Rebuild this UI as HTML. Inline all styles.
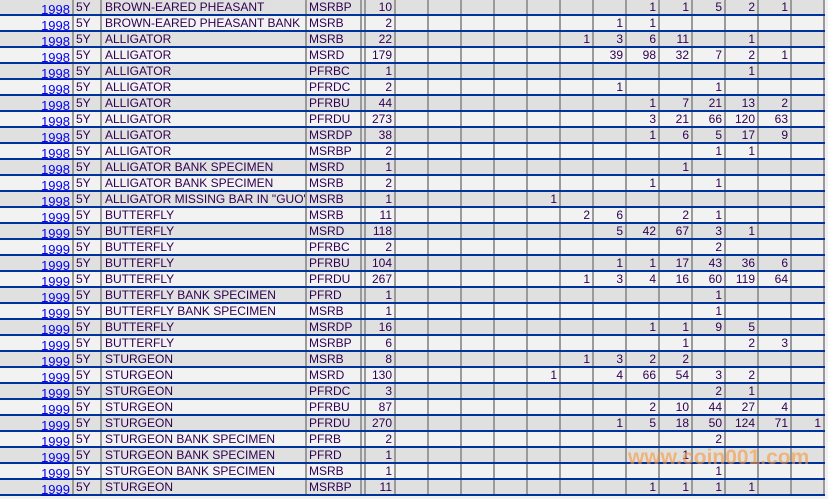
<!DOCTYPE html>
<html><head><meta charset="utf-8"><style>
*{margin:0;padding:0}
body{width:828px;height:485px;overflow:hidden;background:#f2f2f2;font-family:"Liberation Sans",sans-serif;font-size:12px;color:#2e0050;position:relative}
.r{display:flex;height:14px;border-bottom:2px solid #003399;width:825px}
.r:nth-child(odd){background:#e0e0e0}
.r:nth-child(even){background:#f2f2f2}
.r div{box-sizing:border-box;border-right:2px solid #9a9a9a;height:14px;line-height:15px;text-align:right;padding-right:2px;overflow:hidden;white-space:nowrap}
.r .y{width:74px;color:#0000ee;text-decoration:underline;font-size:13px;line-height:19px;overflow:visible;height:14px}
.r .f{width:28px;text-align:left;padding-left:2px}
.r .n{width:205px;text-align:left;padding-left:3px}
.r .t{width:55px;text-align:left;padding-left:2px}
.r .x{width:4px;padding:0}
.r .c{width:30px}
.r .d{width:33px}
#wm{position:absolute;left:628px;top:446px;font-size:21px;font-weight:bold;color:rgba(245,150,60,0.6);letter-spacing:0px}
#wrap{position:absolute;top:0;left:0}
</style></head><body><div id="wrap">
<div class="r"><div class="y">1998</div><div class="f">5Y</div><div class="n">BROWN-EARED PHEASANT</div><div class="t">MSRBP</div><div class="x"></div><div class="c">10</div><div class="d"></div><div class="d"></div><div class="d"></div><div class="d"></div><div class="d"></div><div class="d"></div><div class="d"></div><div class="d">1</div><div class="d">1</div><div class="d">5</div><div class="d">2</div><div class="d">1</div><div class="d"></div></div>
<div class="r"><div class="y">1998</div><div class="f">5Y</div><div class="n">BROWN-EARED PHEASANT BANK</div><div class="t">MSRB</div><div class="x"></div><div class="c">2</div><div class="d"></div><div class="d"></div><div class="d"></div><div class="d"></div><div class="d"></div><div class="d"></div><div class="d">1</div><div class="d">1</div><div class="d"></div><div class="d"></div><div class="d"></div><div class="d"></div><div class="d"></div></div>
<div class="r"><div class="y">1998</div><div class="f">5Y</div><div class="n">ALLIGATOR</div><div class="t">MSRB</div><div class="x"></div><div class="c">22</div><div class="d"></div><div class="d"></div><div class="d"></div><div class="d"></div><div class="d"></div><div class="d">1</div><div class="d">3</div><div class="d">6</div><div class="d">11</div><div class="d"></div><div class="d">1</div><div class="d"></div><div class="d"></div></div>
<div class="r"><div class="y">1998</div><div class="f">5Y</div><div class="n">ALLIGATOR</div><div class="t">MSRD</div><div class="x"></div><div class="c">179</div><div class="d"></div><div class="d"></div><div class="d"></div><div class="d"></div><div class="d"></div><div class="d"></div><div class="d">39</div><div class="d">98</div><div class="d">32</div><div class="d">7</div><div class="d">2</div><div class="d">1</div><div class="d"></div></div>
<div class="r"><div class="y">1998</div><div class="f">5Y</div><div class="n">ALLIGATOR</div><div class="t">PFRBC</div><div class="x"></div><div class="c">1</div><div class="d"></div><div class="d"></div><div class="d"></div><div class="d"></div><div class="d"></div><div class="d"></div><div class="d"></div><div class="d"></div><div class="d"></div><div class="d"></div><div class="d">1</div><div class="d"></div><div class="d"></div></div>
<div class="r"><div class="y">1998</div><div class="f">5Y</div><div class="n">ALLIGATOR</div><div class="t">PFRDC</div><div class="x"></div><div class="c">2</div><div class="d"></div><div class="d"></div><div class="d"></div><div class="d"></div><div class="d"></div><div class="d"></div><div class="d">1</div><div class="d"></div><div class="d"></div><div class="d">1</div><div class="d"></div><div class="d"></div><div class="d"></div></div>
<div class="r"><div class="y">1998</div><div class="f">5Y</div><div class="n">ALLIGATOR</div><div class="t">PFRBU</div><div class="x"></div><div class="c">44</div><div class="d"></div><div class="d"></div><div class="d"></div><div class="d"></div><div class="d"></div><div class="d"></div><div class="d"></div><div class="d">1</div><div class="d">7</div><div class="d">21</div><div class="d">13</div><div class="d">2</div><div class="d"></div></div>
<div class="r"><div class="y">1998</div><div class="f">5Y</div><div class="n">ALLIGATOR</div><div class="t">PFRDU</div><div class="x"></div><div class="c">273</div><div class="d"></div><div class="d"></div><div class="d"></div><div class="d"></div><div class="d"></div><div class="d"></div><div class="d"></div><div class="d">3</div><div class="d">21</div><div class="d">66</div><div class="d">120</div><div class="d">63</div><div class="d"></div></div>
<div class="r"><div class="y">1998</div><div class="f">5Y</div><div class="n">ALLIGATOR</div><div class="t">MSRDP</div><div class="x"></div><div class="c">38</div><div class="d"></div><div class="d"></div><div class="d"></div><div class="d"></div><div class="d"></div><div class="d"></div><div class="d"></div><div class="d">1</div><div class="d">6</div><div class="d">5</div><div class="d">17</div><div class="d">9</div><div class="d"></div></div>
<div class="r"><div class="y">1998</div><div class="f">5Y</div><div class="n">ALLIGATOR</div><div class="t">MSRBP</div><div class="x"></div><div class="c">2</div><div class="d"></div><div class="d"></div><div class="d"></div><div class="d"></div><div class="d"></div><div class="d"></div><div class="d"></div><div class="d"></div><div class="d"></div><div class="d">1</div><div class="d">1</div><div class="d"></div><div class="d"></div></div>
<div class="r"><div class="y">1998</div><div class="f">5Y</div><div class="n">ALLIGATOR BANK SPECIMEN</div><div class="t">MSRD</div><div class="x"></div><div class="c">1</div><div class="d"></div><div class="d"></div><div class="d"></div><div class="d"></div><div class="d"></div><div class="d"></div><div class="d"></div><div class="d"></div><div class="d">1</div><div class="d"></div><div class="d"></div><div class="d"></div><div class="d"></div></div>
<div class="r"><div class="y">1998</div><div class="f">5Y</div><div class="n">ALLIGATOR BANK SPECIMEN</div><div class="t">MSRB</div><div class="x"></div><div class="c">2</div><div class="d"></div><div class="d"></div><div class="d"></div><div class="d"></div><div class="d"></div><div class="d"></div><div class="d"></div><div class="d">1</div><div class="d"></div><div class="d">1</div><div class="d"></div><div class="d"></div><div class="d"></div></div>
<div class="r"><div class="y">1998</div><div class="f">5Y</div><div class="n">ALLIGATOR MISSING BAR IN "GUO"</div><div class="t">MSRB</div><div class="x"></div><div class="c">1</div><div class="d"></div><div class="d"></div><div class="d"></div><div class="d"></div><div class="d">1</div><div class="d"></div><div class="d"></div><div class="d"></div><div class="d"></div><div class="d"></div><div class="d"></div><div class="d"></div><div class="d"></div></div>
<div class="r"><div class="y">1999</div><div class="f">5Y</div><div class="n">BUTTERFLY</div><div class="t">MSRB</div><div class="x"></div><div class="c">11</div><div class="d"></div><div class="d"></div><div class="d"></div><div class="d"></div><div class="d"></div><div class="d">2</div><div class="d">6</div><div class="d"></div><div class="d">2</div><div class="d">1</div><div class="d"></div><div class="d"></div><div class="d"></div></div>
<div class="r"><div class="y">1999</div><div class="f">5Y</div><div class="n">BUTTERFLY</div><div class="t">MSRD</div><div class="x"></div><div class="c">118</div><div class="d"></div><div class="d"></div><div class="d"></div><div class="d"></div><div class="d"></div><div class="d"></div><div class="d">5</div><div class="d">42</div><div class="d">67</div><div class="d">3</div><div class="d">1</div><div class="d"></div><div class="d"></div></div>
<div class="r"><div class="y">1999</div><div class="f">5Y</div><div class="n">BUTTERFLY</div><div class="t">PFRBC</div><div class="x"></div><div class="c">2</div><div class="d"></div><div class="d"></div><div class="d"></div><div class="d"></div><div class="d"></div><div class="d"></div><div class="d"></div><div class="d"></div><div class="d"></div><div class="d">2</div><div class="d"></div><div class="d"></div><div class="d"></div></div>
<div class="r"><div class="y">1999</div><div class="f">5Y</div><div class="n">BUTTERFLY</div><div class="t">PFRBU</div><div class="x"></div><div class="c">104</div><div class="d"></div><div class="d"></div><div class="d"></div><div class="d"></div><div class="d"></div><div class="d"></div><div class="d">1</div><div class="d">1</div><div class="d">17</div><div class="d">43</div><div class="d">36</div><div class="d">6</div><div class="d"></div></div>
<div class="r"><div class="y">1999</div><div class="f">5Y</div><div class="n">BUTTERFLY</div><div class="t">PFRDU</div><div class="x"></div><div class="c">267</div><div class="d"></div><div class="d"></div><div class="d"></div><div class="d"></div><div class="d"></div><div class="d">1</div><div class="d">3</div><div class="d">4</div><div class="d">16</div><div class="d">60</div><div class="d">119</div><div class="d">64</div><div class="d"></div></div>
<div class="r"><div class="y">1999</div><div class="f">5Y</div><div class="n">BUTTERFLY BANK SPECIMEN</div><div class="t">PFRD</div><div class="x"></div><div class="c">1</div><div class="d"></div><div class="d"></div><div class="d"></div><div class="d"></div><div class="d"></div><div class="d"></div><div class="d"></div><div class="d"></div><div class="d"></div><div class="d">1</div><div class="d"></div><div class="d"></div><div class="d"></div></div>
<div class="r"><div class="y">1999</div><div class="f">5Y</div><div class="n">BUTTERFLY BANK SPECIMEN</div><div class="t">MSRB</div><div class="x"></div><div class="c">1</div><div class="d"></div><div class="d"></div><div class="d"></div><div class="d"></div><div class="d"></div><div class="d"></div><div class="d"></div><div class="d"></div><div class="d"></div><div class="d">1</div><div class="d"></div><div class="d"></div><div class="d"></div></div>
<div class="r"><div class="y">1999</div><div class="f">5Y</div><div class="n">BUTTERFLY</div><div class="t">MSRDP</div><div class="x"></div><div class="c">16</div><div class="d"></div><div class="d"></div><div class="d"></div><div class="d"></div><div class="d"></div><div class="d"></div><div class="d"></div><div class="d">1</div><div class="d">1</div><div class="d">9</div><div class="d">5</div><div class="d"></div><div class="d"></div></div>
<div class="r"><div class="y">1999</div><div class="f">5Y</div><div class="n">BUTTERFLY</div><div class="t">MSRBP</div><div class="x"></div><div class="c">6</div><div class="d"></div><div class="d"></div><div class="d"></div><div class="d"></div><div class="d"></div><div class="d"></div><div class="d"></div><div class="d"></div><div class="d">1</div><div class="d"></div><div class="d">2</div><div class="d">3</div><div class="d"></div></div>
<div class="r"><div class="y">1999</div><div class="f">5Y</div><div class="n">STURGEON</div><div class="t">MSRB</div><div class="x"></div><div class="c">8</div><div class="d"></div><div class="d"></div><div class="d"></div><div class="d"></div><div class="d"></div><div class="d">1</div><div class="d">3</div><div class="d">2</div><div class="d">2</div><div class="d"></div><div class="d"></div><div class="d"></div><div class="d"></div></div>
<div class="r"><div class="y">1999</div><div class="f">5Y</div><div class="n">STURGEON</div><div class="t">MSRD</div><div class="x"></div><div class="c">130</div><div class="d"></div><div class="d"></div><div class="d"></div><div class="d"></div><div class="d">1</div><div class="d"></div><div class="d">4</div><div class="d">66</div><div class="d">54</div><div class="d">3</div><div class="d">2</div><div class="d"></div><div class="d"></div></div>
<div class="r"><div class="y">1999</div><div class="f">5Y</div><div class="n">STURGEON</div><div class="t">PFRDC</div><div class="x"></div><div class="c">3</div><div class="d"></div><div class="d"></div><div class="d"></div><div class="d"></div><div class="d"></div><div class="d"></div><div class="d"></div><div class="d"></div><div class="d"></div><div class="d">2</div><div class="d">1</div><div class="d"></div><div class="d"></div></div>
<div class="r"><div class="y">1999</div><div class="f">5Y</div><div class="n">STURGEON</div><div class="t">PFRBU</div><div class="x"></div><div class="c">87</div><div class="d"></div><div class="d"></div><div class="d"></div><div class="d"></div><div class="d"></div><div class="d"></div><div class="d"></div><div class="d">2</div><div class="d">10</div><div class="d">44</div><div class="d">27</div><div class="d">4</div><div class="d"></div></div>
<div class="r"><div class="y">1999</div><div class="f">5Y</div><div class="n">STURGEON</div><div class="t">PFRDU</div><div class="x"></div><div class="c">270</div><div class="d"></div><div class="d"></div><div class="d"></div><div class="d"></div><div class="d"></div><div class="d"></div><div class="d">1</div><div class="d">5</div><div class="d">18</div><div class="d">50</div><div class="d">124</div><div class="d">71</div><div class="d">1</div></div>
<div class="r"><div class="y">1999</div><div class="f">5Y</div><div class="n">STURGEON BANK SPECIMEN</div><div class="t">PFRB</div><div class="x"></div><div class="c">2</div><div class="d"></div><div class="d"></div><div class="d"></div><div class="d"></div><div class="d"></div><div class="d"></div><div class="d"></div><div class="d"></div><div class="d"></div><div class="d">2</div><div class="d"></div><div class="d"></div><div class="d"></div></div>
<div class="r"><div class="y">1999</div><div class="f">5Y</div><div class="n">STURGEON BANK SPECIMEN</div><div class="t">PFRD</div><div class="x"></div><div class="c">1</div><div class="d"></div><div class="d"></div><div class="d"></div><div class="d"></div><div class="d"></div><div class="d"></div><div class="d"></div><div class="d"></div><div class="d">1</div><div class="d"></div><div class="d"></div><div class="d"></div><div class="d"></div></div>
<div class="r"><div class="y">1999</div><div class="f">5Y</div><div class="n">STURGEON BANK SPECIMEN</div><div class="t">MSRB</div><div class="x"></div><div class="c">1</div><div class="d"></div><div class="d"></div><div class="d"></div><div class="d"></div><div class="d"></div><div class="d"></div><div class="d"></div><div class="d"></div><div class="d"></div><div class="d">1</div><div class="d"></div><div class="d"></div><div class="d"></div></div>
<div class="r"><div class="y">1999</div><div class="f">5Y</div><div class="n">STURGEON</div><div class="t">MSRBP</div><div class="x"></div><div class="c">11</div><div class="d"></div><div class="d"></div><div class="d"></div><div class="d"></div><div class="d"></div><div class="d"></div><div class="d"></div><div class="d">1</div><div class="d">1</div><div class="d">1</div><div class="d">1</div><div class="d"></div><div class="d"></div></div>
</div>
<div id="wm">www.coin001.com</div>
</body></html>
